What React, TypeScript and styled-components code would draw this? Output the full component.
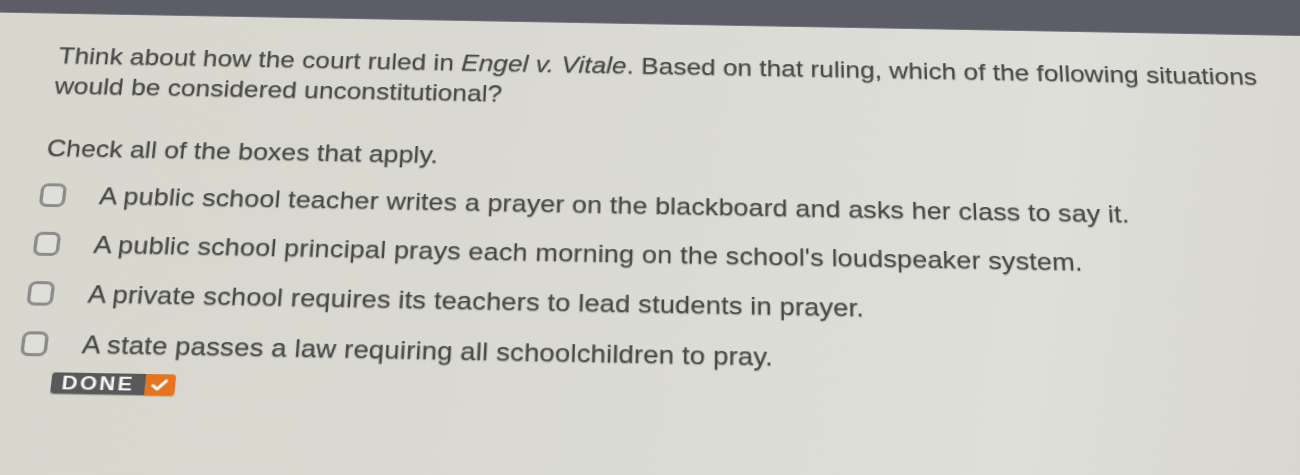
import React from 'react';
import styled, { createGlobalStyle } from 'styled-components';

const OPTIONS = [
  'A public school teacher writes a prayer on the blackboard and asks her class to say it.',
  "A public school principal prays each morning on the school's loudspeaker system.",
  'A private school requires its teachers to lead students in prayer.',
  'A state passes a law requiring all schoolchildren to pray.',
];

const App: React.FC = () => {
  return (
    <>
      <GlobalStyle />
      <Frame>
        <Screen>
          <TopBar />
          <Content>
            <Question>
              Think about how the court ruled in <em>Engel v. Vitale</em>.
              Based on that ruling, which of the following situations
              <br />
              would be considered unconstitutional?
            </Question>
            <Instruction>Check all of the boxes that apply.</Instruction>
            <OptionList>
              {OPTIONS.map(text => (
                <OptionRow key={text}>
                  <CheckBox />
                  <OptionLabel>{text}</OptionLabel>
                </OptionRow>
              ))}
            </OptionList>
            <DoneButton>
              <DoneText>DONE</DoneText>
              <DoneCheck>
                <svg width="15" height="13" viewBox="0 0 16 14">
                  <path
                    d="M2 7.5 L6 11 L14 2.5"
                    fill="none"
                    stroke="#fff"
                    strokeWidth="3"
                    strokeLinecap="round"
                    strokeLinejoin="round"
                  />
                </svg>
              </DoneCheck>
            </DoneButton>
          </Content>
        </Screen>
      </Frame>
    </>
  );
};

export default App;

// Elements

const GlobalStyle = createGlobalStyle`
  html, body {
    margin: 0;
    padding: 0;
    background: #5c5d66;
  }
`;

const Frame = styled.div`
  width: 1300px;
  height: 475px;
  overflow: hidden;
  background: #5c5d66;
`;

// the reference is a photo of a monitor taken at an angle: tilt, keystone and stretch
const Screen = styled.div`
  width: 1300px;
  height: 540px;
  transform-origin: 650px 200px;
  transform: rotate(1.03deg) perspective(1000px) rotateX(10deg) scaleX(1.12);
  background: linear-gradient(100deg, #d8d6cd 0%, #dadad2 45%, #dddfd8 75%, #d8d3ce 100%);
  font-family: 'Liberation Sans', Arial, sans-serif;
  color: #474747;
  filter: blur(0.4px);
`;

const TopBar = styled.div`
  height: 15px;
  background: #5c5d66;
  border-bottom: 1px solid #76777c;
`;

const Content = styled.div`
  display: flex;
  flex-direction: column;
  align-items: flex-start;
  padding: 29px 0 0 107px;
`;

const Question = styled.div`
  font-size: 24px;
  line-height: 32px;
  text-shadow: 0 1px 1px rgba(0, 0, 0, 0.3);

  em {
    font-style: italic;
  }
`;

const Instruction = styled.div`
  margin-top: 34px;
  font-size: 24px;
  line-height: 30px;
  text-shadow: 0 1px 1px rgba(0, 0, 0, 0.3);
`;

const OptionList = styled.div`
  display: flex;
  flex-direction: column;
  gap: 19px;
  margin-top: 18px;
  margin-left: -1px;
`;

const OptionRow = styled.div`
  display: flex;
  align-items: center;
  height: 30px;
`;

const CheckBox = styled.div`
  box-sizing: border-box;
  width: 23px;
  height: 24px;
  border: 3px solid #8c8c8a;
  border-radius: 7px;
  background: #dedfd8;
  margin-right: 30px;
`;

const OptionLabel = styled.div`
  font-size: 24px;
  line-height: 30px;
  letter-spacing: 0.1px;
  text-shadow: 0 1px 1px rgba(0, 0, 0, 0.3);
`;

const DoneButton = styled.div`
  display: flex;
  height: 20px;
  margin-top: 12px;
  margin-left: 29px;
  border-radius: 3px;
  overflow: hidden;
  box-shadow: 0 1px 1px rgba(0, 0, 0, 0.3);
`;

const DoneText = styled.div`
  display: flex;
  align-items: center;
  padding: 0 9px;
  background: #58595b;
  color: #f4f4f4;
  font-family: 'Liberation Sans', Arial, sans-serif;
  font-weight: 700;
  font-size: 19px;
  letter-spacing: 2px;
`;

const DoneCheck = styled.div`
  display: flex;
  align-items: center;
  justify-content: center;
  width: 26px;
  background: #e5731f;
`;
